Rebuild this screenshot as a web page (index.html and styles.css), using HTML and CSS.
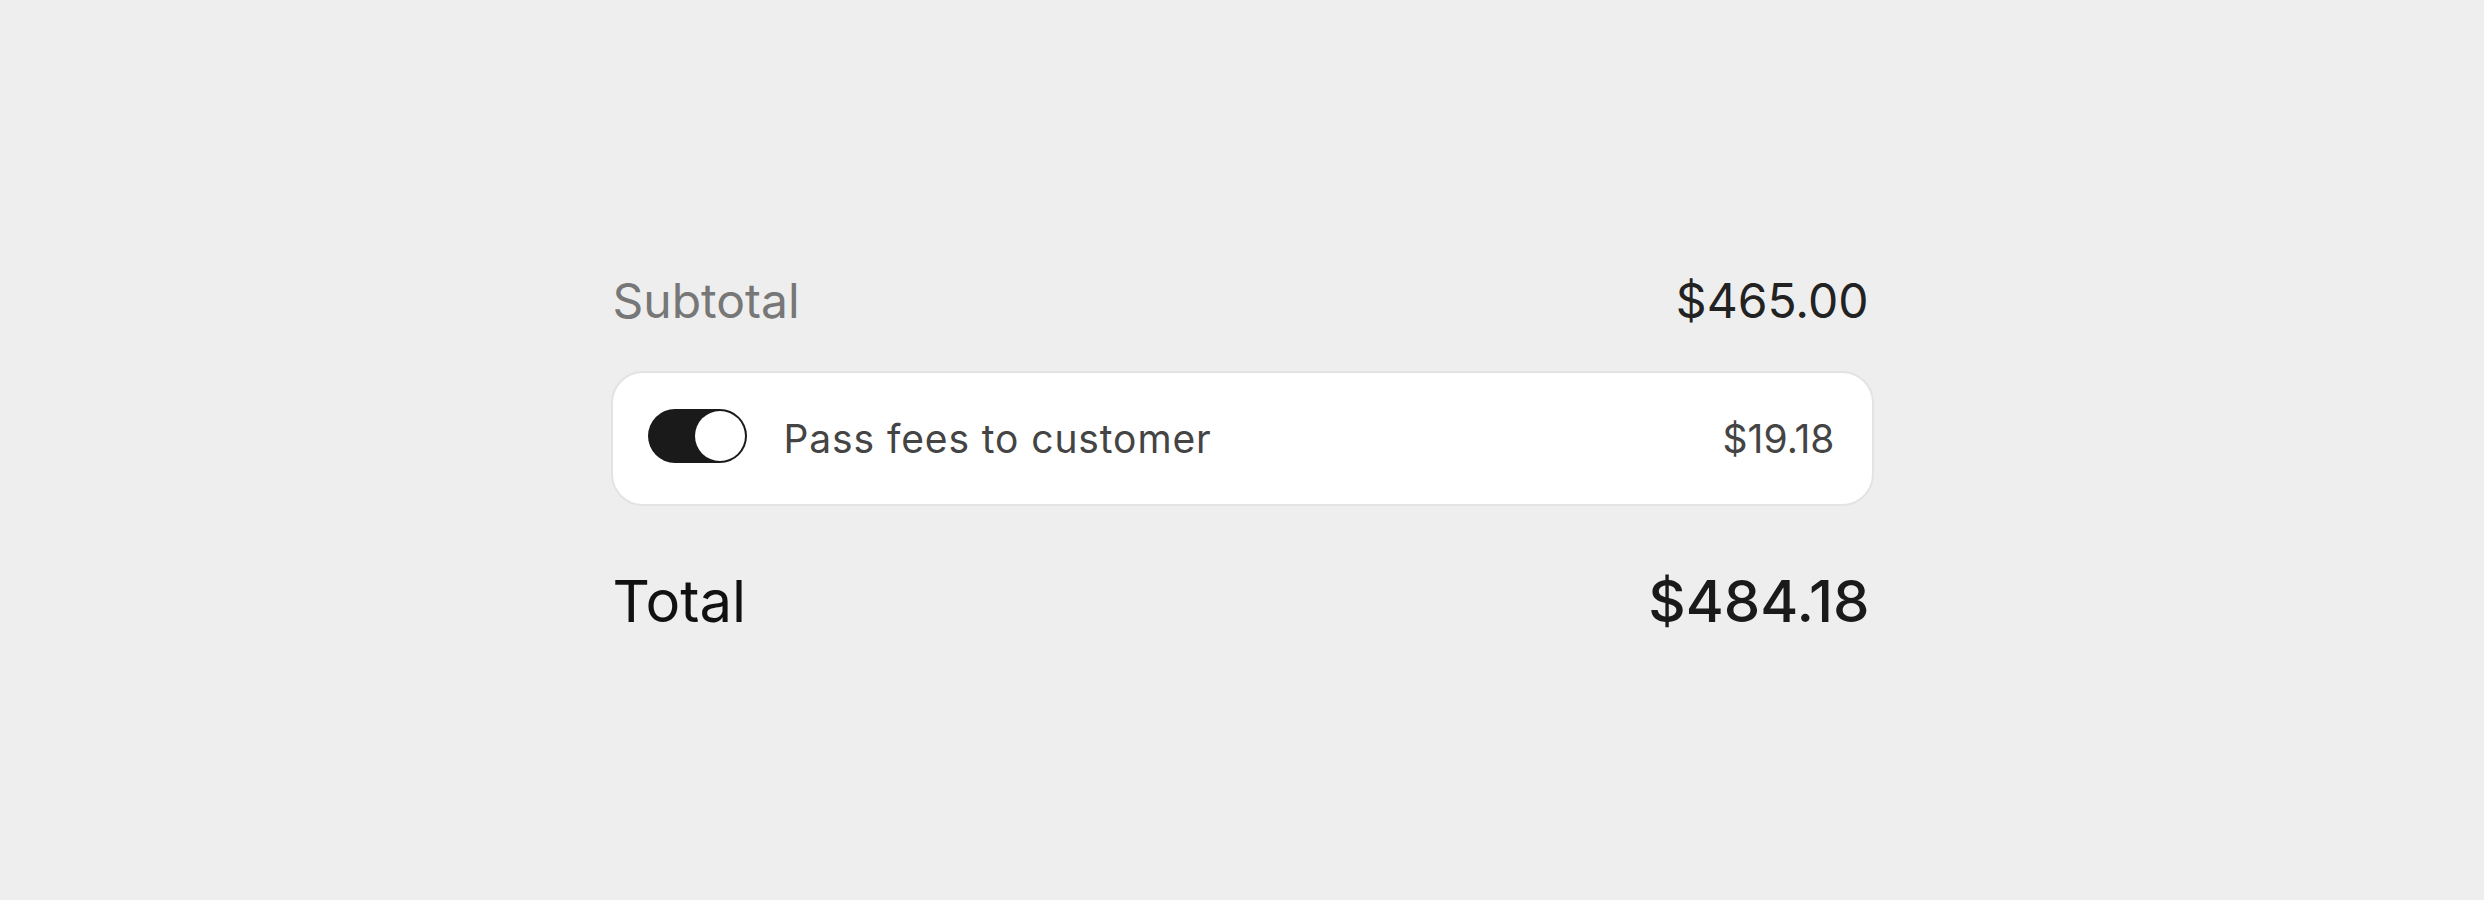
FILE: index.html
```html
<!DOCTYPE html>
<html lang="en">
<head>
<meta charset="utf-8">
<title>Order summary</title>
<link rel="stylesheet" href="styles.css">
</head>
<body>
<main class="summary">
  <div class="row row-subtotal">
    <span class="label">Subtotal</span>
    <span class="amount">$465.00</span>
  </div>
  <div class="fee-card">
    <span class="toggle is-on" role="switch" aria-checked="true"><span class="knob"></span></span>
    <span class="fee-label">Pass fees to customer</span>
    <span class="fee-amount">$19.18</span>
  </div>
  <div class="row row-total">
    <span class="label">Total</span>
    <span class="amount">$484.18</span>
  </div>
</main>
</body>
</html>
```

FILE: styles.css
```css
* { box-sizing: border-box; }

html, body {
  margin: 0;
  padding: 0;
  background: #eeeeee;
  font-family: "Inter", "Noto Sans", sans-serif;
}

.summary {
  width: 1263px;
  margin: 0 auto;
  padding-top: 272px;
  display: flex;
  flex-direction: column;
}

.row {
  display: flex;
  justify-content: space-between;
  align-items: baseline;
}

.row-subtotal {
  font-size: 48px;
  line-height: 58px;
  padding: 0 5px 0 2px;
}
.row-subtotal .label { color: #777777; }
.row-subtotal .amount { color: #222222; }

.fee-card {
  margin-top: 41px;
  height: 135px;
  background: #ffffff;
  border: 2px solid #e3e3e3;
  border-radius: 32px;
  display: flex;
  align-items: center;
  padding: 0 37px 0 35px;
}

.toggle {
  flex: none;
  width: 99px;
  height: 54px;
  border-radius: 27px;
  background: #1a1a1a;
  position: relative;
  margin-bottom: 6px;
}
.toggle .knob {
  position: absolute;
  top: 2px;
  right: 2px;
  width: 50px;
  height: 50px;
  border-radius: 50%;
  background: #ffffff;
}

.fee-label {
  margin-left: 37px;
  flex: 1;
  font-size: 39px;
  line-height: 46px;
  letter-spacing: 0.9px;
  color: #444444;
}
.fee-amount {
  font-size: 39px;
  line-height: 46px;
  color: #444444;
}

.row-total {
  margin-top: 59px;
  font-size: 58px;
  line-height: 72px;
  color: #111111;
  padding: 0 4px 0 2px;
}
.row-total .amount {
  font-weight: 500;
  color: #1a1a1a;
}
```
